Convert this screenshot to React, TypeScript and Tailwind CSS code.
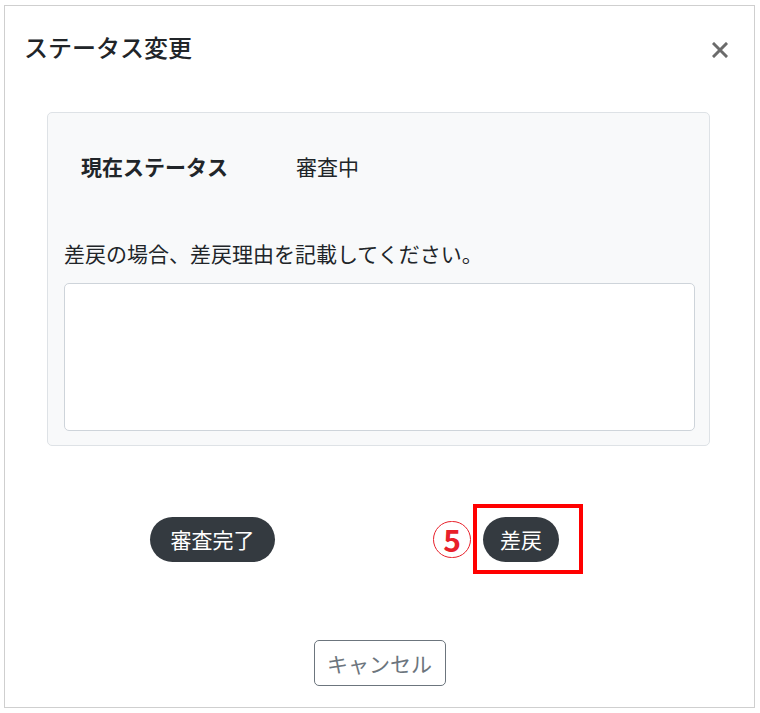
import React from "react";

const font = { fontFamily: '"Noto Sans CJK JP", "Noto Sans", sans-serif' };

export default function App() {
  return (
    <div className="w-[760px] h-[713px] bg-white pt-[5px] pl-[4px]" style={font}>
      {/* Modal */}
      <div className="w-[751px] h-[703px] border border-[#cfcfcf] bg-white flex flex-col text-[#212529]">
        {/* Header */}
        <div className="flex items-start justify-between pl-[19px] pr-[26px] pt-[23px]">
          <h2 className="text-[24px] leading-[36px] font-medium">ステータス変更</h2>
          <button className="mt-[13px] text-[#6b6b6b]" aria-label="閉じる">
            <svg width="16" height="16" viewBox="0 0 16 16">
              <path d="M2 2 L14 14 M14 2 L2 14" stroke="currentColor" strokeWidth="3" strokeLinecap="square" />
            </svg>
          </button>
        </div>

        {/* Status panel */}
        <div className="ml-[42px] mt-[47px] w-[663px] h-[334px] border border-[#dee2e6] rounded-[5px] bg-[#f8f9fa] pt-[38px] pl-[16px] pr-[15px] flex flex-col">
          <div className="flex pl-[17px] text-[21px] leading-[31px]">
            <span className="w-[215px] font-bold">現在ステータス</span>
            <span>審査中</span>
          </div>
          <p className="mt-[56px] text-[21px] leading-[31px]">差戻の場合、差戻理由を記載してください。</p>
          <textarea className="mt-[14px] w-[631px] h-[148px] bg-white border border-[#ced4da] rounded-[5px] resize-none outline-none" />
        </div>

        {/* Action buttons */}
        <div className="mt-[58px] flex items-center pl-[145px]">
          <button className="w-[125px] h-[45px] rounded-full bg-[#343a40] text-white text-[21px] leading-none">
            審査完了
          </button>
          <span className="ml-[158px] w-[38px] h-[37px] rounded-full border-[1.5px] border-[#e8202a] text-[#e8202a] font-bold text-[30px] leading-none flex items-center justify-center">
            5
          </span>
          <div className="ml-[2px] w-[110px] h-[70px] border-4 border-[#ff0000] pl-[6px] flex items-center">
            <button className="w-[76px] h-[45px] rounded-full bg-[#343a40] text-white text-[21px] leading-none">
              差戻
            </button>
          </div>
        </div>

        {/* Cancel */}
        <div className="mt-[66px] flex justify-center">
          <button className="w-[132px] h-[46px] border border-[#6c757d] rounded-[5px] text-[#6c757d] text-[21px] leading-none">
            キャンセル
          </button>
        </div>
      </div>
    </div>
  );
}
